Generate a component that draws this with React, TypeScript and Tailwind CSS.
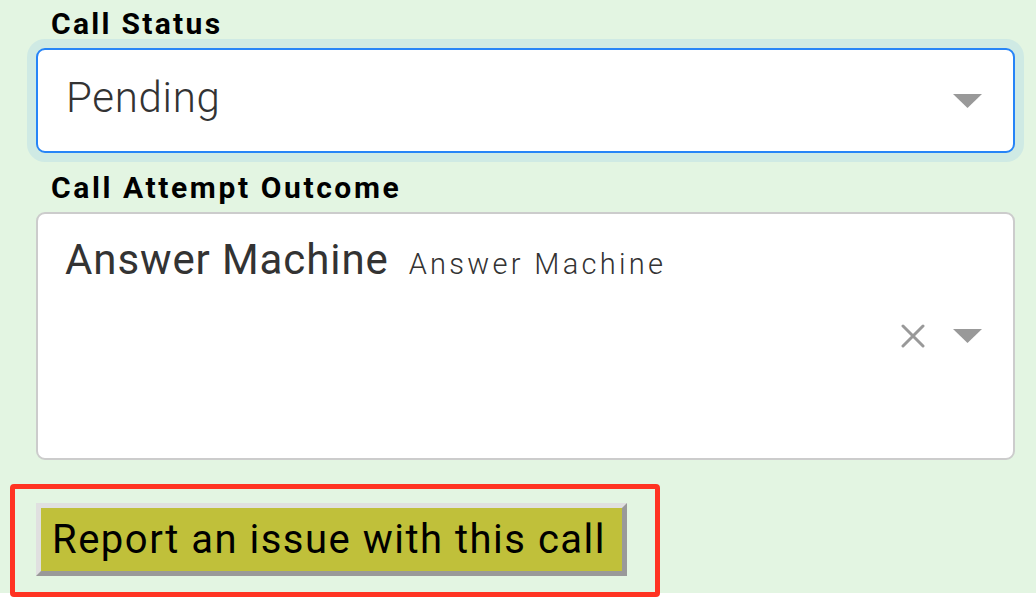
import React from "react";

function Caret() {
  return (
    <svg width="29" height="14" viewBox="0 0 29 14" className="block">
      <path d="M0 0 L29 0 L14.5 14 Z" fill="#999999" />
    </svg>
  );
}

function Cross() {
  return (
    <svg width="24" height="24" viewBox="0 0 24 24" className="block">
      <path d="M2 2 L22 22 M22 2 L2 22" stroke="#999999" strokeWidth="3" strokeLinecap="round" />
    </svg>
  );
}

export default function App() {
  return (
    <div className="relative w-full h-[604px] bg-white" style={{ fontFamily: "Roboto, 'Noto Sans', sans-serif" }}>
      <div className="h-[593px] bg-[#e3f5e2] pl-[36px] pr-[21px] pt-[6px] flex flex-col">
        <div className="pl-[15px] text-[30px] leading-[36px] font-bold tracking-[2.3px] text-black">Call Status</div>
        <div className="mt-[6px] h-[105px] rounded-[9px] border-2 border-[#2684f7] bg-white shadow-[0_0_0_9px_#cfeae4] flex items-center pl-[28px] pr-[31px]">
          <span className="flex-1 mb-[6px] text-[42px] font-light tracking-[0.7px] text-[#333333]">Pending</span>
          <Caret />
        </div>
        <div className="mt-[17px] pl-[15px] text-[30px] leading-[36px] font-bold tracking-[2.6px] text-black">Call Attempt Outcome</div>
        <div className="mt-[6px] h-[248px] rounded-[9px] border-2 border-[#cccccc] bg-white flex pl-[27px] pr-[31px]">
          <div className="flex-1 pt-[14px] flex items-baseline gap-[20px]">
            <span className="text-[42px] font-normal tracking-[0.9px] text-[#333333]">Answer Machine</span>
            <span className="text-[29px] font-light tracking-[3.3px] text-[#333333]">Answer Machine</span>
          </div>
          <div className="flex items-center gap-[28px]">
            <Cross />
            <Caret />
          </div>
        </div>
        <div className="mt-[43px] flex">
          <button className="w-[591px] h-[73px] pl-[11px] text-left bg-[#c0c03a] border-[5px] border-t-[#e0e0e0] border-l-[#e0e0e0] border-b-[#999999] border-r-[#999999] text-[40px] font-normal tracking-[1.5px] text-black leading-none">
            Report an issue with this call
          </button>
        </div>
      </div>
      <div className="absolute left-[10px] top-[484px] w-[650px] h-[113px] border-[5px] border-[#ff3322] rounded-[4px] pointer-events-none" />
    </div>
  );
}
